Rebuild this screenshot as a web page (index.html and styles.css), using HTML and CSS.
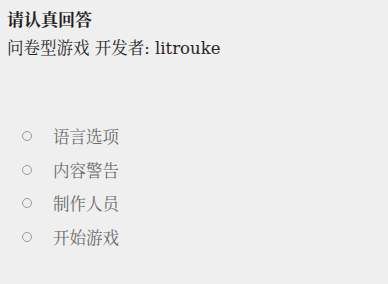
FILE: index.html
```html
<!DOCTYPE html>
<html lang="zh-CN">
<head>
<meta charset="utf-8">
<link rel="stylesheet" href="styles.css">
</head>
<body>
<div class="page">
  <div class="title">请认真回答</div>
  <div class="subtitle">问卷型游戏 开发者: litrouke</div>
  <ul class="menu">
    <li class="item"><span class="dot"></span><span class="label">语言选项</span></li>
    <li class="item"><span class="dot"></span><span class="label">内容警告</span></li>
    <li class="item"><span class="dot"></span><span class="label">制作人员</span></li>
    <li class="item"><span class="dot"></span><span class="label">开始游戏</span></li>
  </ul>
</div>
</body>
</html>
```
FILE: styles.css
```css
html, body {
  margin: 0;
  padding: 0;
  background: #efefef;
}
body {
  font-family: "Liberation Serif", "Noto Serif CJK SC", "Noto Sans CJK SC", serif;
  color: #222;
}
.page {
  padding: 9px 7px;
}
.title {
  font-size: 17px;
  font-weight: bold;
  line-height: 24px;
  color: #1e1e1e;
}
.subtitle {
  font-family: "DejaVu Serif", "Noto Serif CJK SC", "Noto Sans CJK SC", serif;
  font-size: 16.5px;
  line-height: 26px;
  margin-top: 3px;
  color: #262626;
}
.menu {
  list-style: none;
  margin: 62px 0 0;
  padding: 0 0 0 15px;
  display: flex;
  flex-direction: column;
  gap: 9.5px;
}
.item {
  display: flex;
  align-items: center;
  height: 24px;
  color: #6a6a6a;
  font-size: 16.5px;
}
.dot {
  width: 8px;
  height: 8px;
  border: 1px solid #9a9a9a;
  border-radius: 50%;
  box-sizing: content-box;
}
.label {
  margin-left: 21px;
}
```
